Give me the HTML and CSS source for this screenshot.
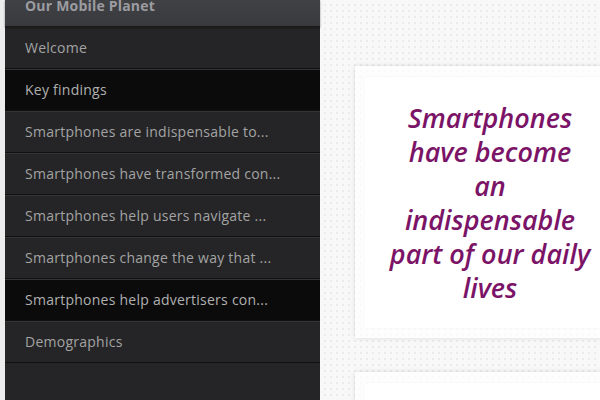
FILE: index.html
```html
<!DOCTYPE html>
<html>
<head>
<meta charset="utf-8">
<link rel="stylesheet" href="styles.css">
</head>
<body>
<div class="page">
  <div class="edge"></div>
  <nav class="sidebar">
    <div class="sidebar-head">Our Mobile Planet</div>
    <ul class="menu">
      <li class="item">Welcome</li>
      <li class="item active">Key findings</li>
      <li class="item">Smartphones are indispensable to...</li>
      <li class="item">Smartphones have transformed con...</li>
      <li class="item">Smartphones help users navigate ...</li>
      <li class="item">Smartphones change the way that ...</li>
      <li class="item active">Smartphones help advertisers con...</li>
      <li class="item">Demographics</li>
    </ul>
  </nav>
  <main class="main">
    <section class="card">
      <div class="card-inner">
        <h1 class="headline">Smartphones have become<br>an indispensable part of our daily lives</h1>
      </div>
    </section>
    <section class="card">
      <div class="card-inner"></div>
    </section>
  </main>
</div>
</body>
</html>
```

FILE: styles.css
```css
html, body {
  margin: 0;
  padding: 0;
  width: 600px;
  height: 400px;
  overflow: hidden;
}
body {
  font-family: "Open Sans", "Liberation Sans", sans-serif;
}
.page {
  display: flex;
  height: 400px;
}
.edge {
  width: 5px;
  flex: none;
  background: #ececec;
}
.sidebar {
  width: 315px;
  flex: none;
  background: #252527;
  display: flex;
  flex-direction: column;
}
.sidebar-head {
  height: 27px;
  box-sizing: border-box;
  padding: 0 20px;
  line-height: 11px;
  font-size: 14px;
  font-weight: 700;
  letter-spacing: 0.2px;
  color: #9c9ca0;
  background: linear-gradient(#404145, #393a3e);
  border-bottom: 1px solid #19191b;
  box-shadow: 0 1px 2px rgba(0,0,0,0.4);
  position: relative;
}
.menu {
  list-style: none;
  margin: 0;
  padding: 0;
}
.item {
  height: 40px;
  line-height: 40px;
  padding: 0 20px;
  font-size: 14px;
  letter-spacing: 0.25px;
  color: #a3a3a3;
  background: #252527;
  border-top: 1px solid #333335;
  border-bottom: 1px solid #111112;
  white-space: nowrap;
}
.item:first-child {
  border-top-color: #252527;
}
.item.active {
  background: #0b0b0b;
  color: #b0b0b0;
}
.main {
  flex: 1;
  overflow: hidden;
  padding: 66px 0 0 35px;
  background-color: #f8f8f8;
  background-image:
    linear-gradient(90deg, #f8f8f8 4px, transparent 4px),
    linear-gradient(#f8f8f8 4px, #ebebeb 4px);
  background-size: 6px 6px;
  display: flex;
  flex-direction: column;
  gap: 34px;
}
.card {
  width: 280px;
  flex: none;
  padding: 11px 0 10px 10px;
  background: rgba(255,255,255,0.7);
  box-shadow: 0 0 5px rgba(0,0,0,0.12);
}
.card-inner {
  height: 251px;
  background: #fff;
  box-shadow: 0 0 1px rgba(0,0,0,0.08);
  display: flex;
  align-items: center;
  padding-left: 22px;
}
.headline {
  margin: 0;
  width: 206px;
  text-align: center;
  font-family: "Open Sans", sans-serif;
  font-style: italic;
  font-weight: 600;
  font-size: 27px;
  line-height: 34px;
  color: #7b1467;
}
```
